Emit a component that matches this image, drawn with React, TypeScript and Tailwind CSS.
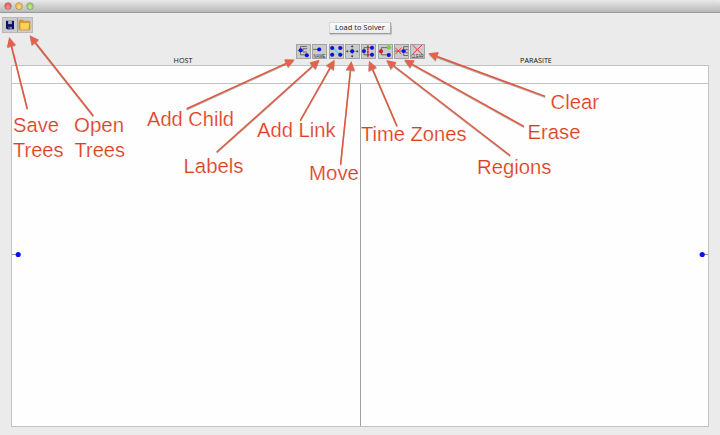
import React from 'react';

type Arrow = { tip: [number, number]; tail: [number, number] };
type Note = { text: string; x: number; y: number; w: number };

const arrows: Arrow[] = [
  { tip: [9.2, 37], tail: [27.3, 108.7] },
  { tip: [29.6, 35.2], tail: [93.3, 115.8] },
  { tip: [294.6, 59.5], tail: [186.7, 108.7] },
  { tip: [319.5, 59.8], tail: [216.7, 152] },
  { tip: [334.6, 59.8], tail: [300.2, 120.5] },
  { tip: [351.4, 61], tail: [340.6, 164.5] },
  { tip: [369, 60.8], tail: [397, 126] },
  { tip: [386.3, 60.1], tail: [510.2, 155.5] },
  { tip: [404.2, 59.8], tail: [524, 126.4] },
  { tip: [428.4, 53.2], tail: [545.3, 96.4] },
];

const notes: Note[] = [
  { text: 'Save', x: 13, y: 132, w: 46 },
  { text: 'Trees', x: 13, y: 156.6, w: 50.5 },
  { text: 'Open', x: 74, y: 132, w: 50 },
  { text: 'Trees', x: 74.5, y: 156.6, w: 50.5 },
  { text: 'Add Child', x: 147, y: 125.5, w: 87 },
  { text: 'Labels', x: 183.5, y: 173.3, w: 60 },
  { text: 'Add Link', x: 257, y: 137.3, w: 78.5 },
  { text: 'Move', x: 309, y: 180.2, w: 50 },
  { text: 'Time Zones', x: 361, y: 140.8, w: 105.5 },
  { text: 'Regions', x: 477, y: 174.3, w: 74.5 },
  { text: 'Erase', x: 527.5, y: 139.2, w: 53 },
  { text: 'Clear', x: 550.5, y: 109.4, w: 48.5 },
];

function ArrowShape({ tip, tail }: Arrow) {
  const dx = tip[0] - tail[0];
  const dy = tip[1] - tail[1];
  const len = Math.hypot(dx, dy);
  const ux = dx / len;
  const uy = dy / len;
  const bx = tip[0] - ux * 9.3;
  const by = tip[1] - uy * 9.3;
  return (
    <g>
      <line x1={tail[0]} y1={tail[1]} x2={bx} y2={by} stroke="#e0573c" strokeWidth="1.5" />
      <polygon
        points={`${tip[0]},${tip[1]} ${bx - uy * 4.6},${by + ux * 4.6} ${bx + uy * 4.6},${by - ux * 4.6}`}
        fill="#e4624b"
      />
    </g>
  );
}

function Annotations() {
  return (
    <svg className="pointer-events-none absolute inset-0" width="720" height="435" viewBox="0 0 720 435">
      <g className="drop-shadow-[0px_1px_0.7px_rgba(0,0,0,0.3)]">
        {arrows.map((a, i) => (
          <ArrowShape key={i} {...a} />
        ))}
      </g>
      {notes.map((n, i) => (
        <text
          key={i}
          x={n.x}
          y={n.y}
          textLength={n.w}
          lengthAdjust="spacingAndGlyphs"
          fill="#dc4022"
          stroke="#ffffff"
          strokeWidth="0.2"
          className="font-['Liberation_Sans',Arial,sans-serif] text-[20.5px]"
        >
          {n.text}
        </text>
      ))}
    </svg>
  );
}

function Dot({ x, y, color = '#0c0cf0' }: { x: number; y: number; color?: string }) {
  return <circle cx={x} cy={y} r="1.95" fill={color} stroke="#27274c" strokeOpacity="0.45" strokeWidth="0.3" />;
}

function Caption({ children, w }: { children: string; w: number }) {
  return (
    <text
      x={7.4 - w / 2}
      y="13.7"
      textLength={w}
      lengthAdjust="spacingAndGlyphs"
      fill="#333333"
      className="font-['Liberation_Sans',Arial,sans-serif] text-[4.6px]"
    >
      {children}
    </text>
  );
}

const line = { stroke: '#444444', strokeWidth: 0.7, fill: 'none' };

const tools: { name: string; art: React.ReactNode }[] = [
  {
    name: 'Add Child',
    art: (
      <>
        <path d="M2 6.5H4.5M4.5 2.5V10.8M4.5 2.5H11M4.5 10.8H10M7 4.7V8M7 4.7H11M7 8H11" {...line} />
        <Dot x={4.7} y={6.3} />
        <Dot x={10.8} y={11.2} />
      </>
    ),
  },
  {
    name: 'Labels',
    art: (
      <>
        <path d="M1 5.4H7" {...line} />
        <Dot x={7.2} y={5.4} />
        <Caption w={12}>NAME</Caption>
      </>
    ),
  },
  {
    name: 'Add Link',
    art: (
      <>
        <path d="M1 4H4M1 10.7H4M11 4H14M11 10.7H14" {...line} />
        <path d="M4.8 4.2L9.8 10.4" stroke="#40dcec" strokeWidth="1.4" />
        <Dot x={3.2} y={4} />
        <Dot x={11.2} y={4} />
        <Dot x={3.2} y={10.8} />
        <Dot x={11.2} y={10.8} />
      </>
    ),
  },
  {
    name: 'Move',
    art: (
      <>
        <path d="M1.5 7.3H13M7.2 1.7V13" {...line} strokeDasharray="2 1" />
        <path d="M7.2 1.2l1.4 1.8H5.8zM7.2 13.5l1.4-1.8H5.8zM1 7.3l1.8-1.4v2.8zM13.6 7.3l-1.8-1.4v2.8z" fill="#444" />
        <Dot x={7.2} y={7.3} />
      </>
    ),
  },
  {
    name: 'Time Zones',
    art: (
      <>
        <path d="M0.8 7.2H3M3 3.6V10.8M3 3.6H11M3 10.8H11" {...line} />
        <path d="M6.9 1.4V13.3" stroke="#db171d" strokeWidth="1.5" strokeDasharray="2.4 .4" />
        <Dot x={3} y={7.1} />
        <Dot x={11} y={3.8} />
        <Dot x={11} y={10.8} />
      </>
    ),
  },
  {
    name: 'Regions',
    art: (
      <>
        <path d="M1 7.2H3M3.4 3.6V10.8M3.4 3.6H10M3.4 10.8H10" {...line} />
        <Dot x={3} y={7.3} color="#f21b17" />
        <Dot x={10.8} y={3.4} color="#65e716" />
        <Dot x={10.8} y={11} />
      </>
    ),
  },
  {
    name: 'Erase',
    art: (
      <>
        <path d="M0.8 7.1H9.7M9.7 2.6V11.5M9.7 2.6H14M9.7 11.5H14M11.6 5.6V8.8M11.6 5.6H14M11.6 8.8H14" {...line} />
        <path d="M1.2 3.7L7.5 10.3M7.5 3.7L1.2 10.3" stroke="#fa3534" strokeWidth="1" />
        <Dot x={9.5} y={7.1} />
      </>
    ),
  },
  {
    name: 'Clear',
    art: (
      <>
        <path d="M2.5 1L12 10.2M12 1L2.5 10.2" stroke="#fa3534" strokeWidth="1" />
        <Caption w={12.4}>CLEAR</Caption>
      </>
    ),
  },
];

function TitleBar() {
  return (
    <header className="flex h-[13px] shrink-0 items-start gap-[5px] rounded-t-[3px] border-b border-[#9a9a9a] bg-linear-to-b from-[#e8e8e8] to-[#b9b9b9] pl-[5px] pt-[3px]">
      <i className="size-[6px] rounded-full bg-radial-[at_50%_65%] from-[#ff9b91] to-[#c93431] ring-[0.5px] ring-[#8f5753]" />
      <i className="size-[6px] rounded-full bg-radial-[at_50%_65%] from-[#ffe58a] to-[#d69424] ring-[0.5px] ring-[#967542]" />
      <i className="size-[6px] rounded-full bg-radial-[at_50%_65%] from-[#d0f5a0] to-[#67ab3a] ring-[0.5px] ring-[#5e8749]" />
    </header>
  );
}

function FileButtons() {
  return (
    <div className="ml-[2px] flex h-[16px] w-[31px] border border-[#b8b8b8] bg-[#cccccc]">
      <button aria-label="Save Trees" className="flex w-[15px] items-center justify-center border-r border-[#a2a2a2]">
        <svg width="10" height="10" viewBox="0 0 10 10">
          <path d="M1 0.8H9V9.2H2L1 8.2Z" fill="#101070" />
          <path d="M3.1 0.6H6.9V4.1H3.1Z" fill="#a9b0b8" />
          <path d="M3.1 6.8H6.9V9.3H3.1Z" fill="#7d84a4" />
          <path d="M3.5 7.2H4.6V9.2H3.5Z" fill="#090948" />
        </svg>
      </button>
      <button aria-label="Open Trees" className="flex w-[15px] items-center justify-center">
        <svg width="13" height="12" viewBox="0 0 13 12">
          <path d="M1 10V2Q1 1 2 1H4.7L6 2.2H11Q12 2.2 12 3.2V10Q12 11 11 11H2Q1 11 1 10Z" fill="#d89c27" stroke="#ac812b" strokeWidth=".5" />
          <path d="M2.2 4H11.6L10.8 10.5H2.2Z" fill="#ffd05c" />
          <path d="M2 4L1.8 10.2M11.7 3.5L11 10.7" stroke="#b88a32" strokeWidth=".6" />
        </svg>
      </button>
    </div>
  );
}

export default function App() {
  return (
    <div className="relative flex h-[435px] w-[720px] flex-col overflow-hidden bg-[#ebebeb] font-['Open_Sans','Noto_Sans',sans-serif]">
      <TitleBar />
      <div className="grid h-[31px] shrink-0 grid-cols-[329px_63px_1fr] items-start">
        <div className="pt-[4px]">
          <FileButtons />
        </div>
        <button className="mt-[9px] flex h-[12px] w-[62px] items-center justify-center whitespace-nowrap border border-b-[#9b9b9b] border-l-[#d7d7d7] border-r-[#aaaaaa] border-t-[#d7d7d7] bg-linear-to-b from-[#fafafa] to-[#ebebeb] text-[7.5px] leading-none text-[#202020] shadow-[0.5px_1px_1px_rgba(0,0,0,0.2)]">
          Load to Solver
        </button>
      </div>
      <div className="ml-[296px] flex h-[11px] shrink-0 gap-[1.34px]">
        {tools.map((t) => (
          <button key={t.name} aria-label={t.name} className="size-[15px] shrink-0 bg-[#c9c9c9]">
            <svg width="15" height="15" viewBox="0 0 15 15" className="block overflow-visible">
              <rect x="0.4" y="0.4" width="14.1" height="14.1" fill="#cbcbcb" stroke="#999999" strokeWidth="0.8" />
              {t.art}
            </svg>
          </button>
        ))}
      </div>
      <div className="grid h-[10px] shrink-0 grid-cols-[366px_340px] text-center text-[7.2px] leading-[11px] text-[#101010]">
        <span>HOST</span>
        <span>PARASITE</span>
      </div>
      <main className="ml-[11px] flex h-[362px] w-[698px] shrink-0 flex-col border border-[#c2c2c2] bg-[#fefefe]">
        <div className="h-[18px] shrink-0 border-b border-[#c2c2c2]" />
        <div className="grid grow grid-cols-[349px_1fr]">
          <section className="flex items-start border-r border-[#a0a0a0] pt-[167px]">
            <svg width="10" height="7" viewBox="0 0 10 7">
              <path d="M0 3.5H5" stroke="#999999" />
              <circle cx="6.2" cy="3.5" r="2.6" fill="#1010f4" />
            </svg>
          </section>
          <section className="flex items-start justify-end pt-[167px]">
            <svg width="10" height="7" viewBox="0 0 10 7">
              <path d="M5 3.5H10" stroke="#999999" />
              <circle cx="4.2" cy="3.5" r="2.6" fill="#1010f4" />
            </svg>
          </section>
        </div>
      </main>
      <Annotations />
    </div>
  );
}
